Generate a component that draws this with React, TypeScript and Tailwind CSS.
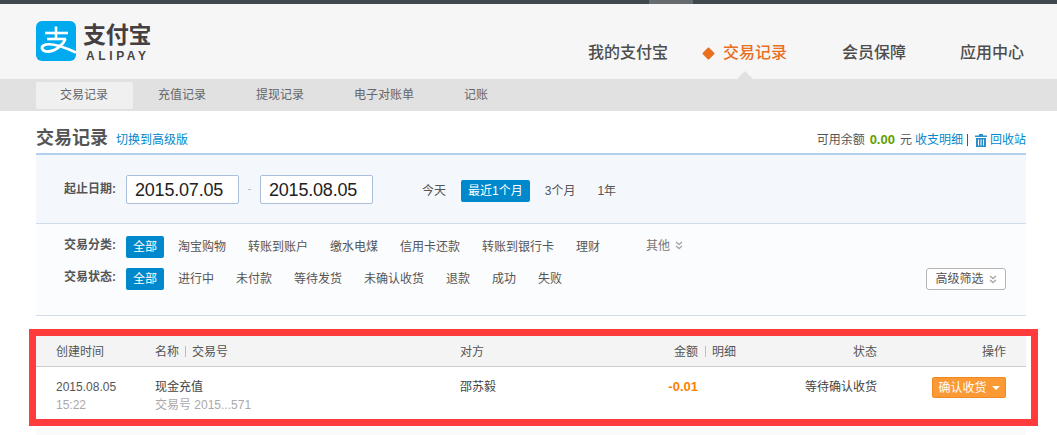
import React from 'react';

const DoubleChevron: React.FC = () => (
  <svg width="8" height="9" viewBox="0 0 8 9" fill="none" stroke="#a8a8a8" strokeWidth="1.4">
    <path d="M1 1l3 2.6L7 1" />
    <path d="M1 5l3 2.6L7 5" />
  </svg>
);

const Logo: React.FC = () => (
  <div className="flex items-start">
    <svg width="40" height="40" viewBox="0 0 40 40">
      <rect width="40" height="40" rx="6" fill="#00aaee" />
      <g fill="none" stroke="#fff" strokeWidth="2.6">
        <path d="M9 12h23" />
        <path d="M20 5.500v12" />
        <path d="M11 18h19" />
      </g>
      <path d="M29.500 18c-2 5-9 12-17 12.500-6 .5-8-4-5-6 5-3 15-1 32.500 7" fill="none" stroke="#fff" strokeWidth="2.800" />
    </svg>
    <div className="ml-[7px] flex flex-col">
      <span className="text-[23px] leading-[27px] font-bold text-[#443f40] tracking-[-0.3px] mt-[1px]">支付宝</span>
      <span className="text-[12px] leading-[12px] font-['Liberation_Sans'] font-bold tracking-[3.6px] text-[#4a4546] ml-[3px] mt-[1px]">ALIPAY</span>
    </div>
  </div>
);

const FilterRow: React.FC<{ label: string; items: string[] }> = ({ label, items }) => (
  <div className="flex items-center h-[22px]">
    <span className="w-[62px] -mt-[5px] font-bold text-[#555]">{label}</span>
    <div className="flex gap-[8px]">
      {items.map((item, i) => (
        <span
          key={item}
          className={`px-[7px] leading-[22px] rounded-[2px] ${i === 0 ? 'bg-[#0088cc] text-white -mr-[1px]' : 'text-[#555]'}`}
        >
          {item}
        </span>
      ))}
    </div>
  </div>
);

export default function App() {
  return (
    <div className="w-[1057px] h-[435px] overflow-hidden bg-white text-[12px] text-[#555] font-['Liberation_Sans','Noto_Sans_CJK_SC',sans-serif]">
      {/* top bar */}
      <div className="h-[4px] bg-[#3f484c] flex">
        <div className="w-[649px]" />
        <div className="w-[44px] bg-[#666b6f]" />
      </div>

      {/* header */}
      <div className="relative h-[75px] bg-[#f6f6f6] pl-[36px] pr-[33px] pt-[17px] flex justify-between">
        <Logo />
        <nav className="flex items-center h-[24px] mt-[20px] text-[16px] font-medium text-[#4d4d4d]">
          <span>我的支付宝</span>
          <span className="ml-[36px] w-[9px] h-[9px] rotate-45 rounded-[1px] bg-[#e8701f]" />
          <span className="ml-[10px] text-[#e8701f]">交易记录</span>
          <span className="ml-[55px]">会员保障</span>
          <span className="ml-[54px]">应用中心</span>
        </nav>
        <div className="absolute left-[737px] bottom-0 w-0 h-0 border-x-[8px] border-x-transparent border-b-[8px] border-b-[#e1e1e1]" />
      </div>

      {/* sub nav */}
      <div className="h-[32px] bg-[#e1e1e1] px-[36px] pt-[3px] flex items-start text-[#666]">
        <span className="pl-[24px] pr-[25px] h-[27px] leading-[27px] bg-[#f0f0f0] rounded-[2px]">交易记录</span>
        <span className="px-[25px] h-[27px] leading-[27px]">充值记录</span>
        <span className="px-[25px] h-[27px] leading-[27px]">提现记录</span>
        <span className="px-[25px] h-[27px] leading-[27px]">电子对账单</span>
        <span className="px-[25px] h-[27px] leading-[27px]">记账</span>
      </div>

      <div className="ml-[36px] w-[990px]">
        {/* title */}
        <div className="h-[44px] flex items-end justify-between pb-[3px] border-b-[2px] border-[#b3d0ee]">
          <div className="flex items-end">
            <span className="text-[18px] leading-[24px] font-bold text-[#555]">交易记录</span>
            <a className="ml-[8px] leading-[20px] text-[#0088cc]">切换到高级版</a>
          </div>
          <div className="flex items-center leading-[20px]">
            <span>可用余额</span>
            <span className="ml-[5px] text-[13px] font-bold text-[#5fa000]">0.00</span>
            <span className="ml-[5px]">元</span>
            <a className="ml-[3px] text-[#0088cc]">收支明细</a>
            <span className="ml-[4px] w-px h-[12px] bg-[#555]" />
            <svg className="ml-[7px]" width="12" height="13" viewBox="0 0 12 13" fill="#2a8fc9">
              <path d="M4 0h4v1.5h4V3H0V1.500h4zM1 4h10v9H1zM3 5.500v6h1v-6zM5.500 5.500v6h1v-6zM8 5.500v6h1v-6z" fillRule="evenodd" />
            </svg>
            <a className="ml-[3px] text-[#0088cc]">回收站</a>
          </div>
        </div>

        {/* date range */}
        <div className="h-[69px] bg-[#f4f8fd] border-b border-[#d0dcea] pl-[28px] pt-[20px] flex items-start">
          <span className="w-[62px] leading-[28px] font-bold text-[#555]">起止日期:</span>
          <div className="w-[113px] h-[29px] bg-white border border-[#a9bfdc] rounded-[2px] pl-[8px] text-[18px] leading-[28px] tracking-[-0.2px] text-[#222]">
            2015.07.05
          </div>
          <span className="w-[21px] text-center leading-[28px] text-[#bbb]">-</span>
          <div className="w-[113px] h-[29px] bg-white border border-[#a9bfdc] rounded-[2px] pl-[8px] text-[18px] leading-[28px] tracking-[-0.2px] text-[#222]">
            2015.08.05
          </div>
          <div className="ml-[42px] mt-[5px] flex gap-[8px] leading-[22px]">
            <span className="px-[7px]">今天</span>
            <span className="px-[7px] bg-[#0088cc] text-white rounded-[2px]">最近1个月</span>
            <span className="px-[7px]">3个月</span>
            <span className="px-[7px]">1年</span>
          </div>
        </div>

        {/* filters */}
        <div className="h-[92px] bg-[#fbfcfe] border-b border-[#d0dcea] pl-[28px] pr-[20px] pt-[12px] flex flex-col gap-[10px]">
          <div className="flex items-center">
            <FilterRow label="交易分类:" items={['全部', '淘宝购物', '转账到账户', '缴水电煤', '信用卡还款', '转账到银行卡', '理财']} />
            <span className="ml-[39px] -mt-[3px] text-[#777]">其他</span>
            <span className="ml-[5px] -mt-[3px]"><DoubleChevron /></span>
          </div>
          <div className="flex items-center justify-between">
            <FilterRow label="交易状态:" items={['全部', '进行中', '未付款', '等待发货', '未确认收货', '退款', '成功', '失败']} />
            <button className="h-[22px] w-[80px] flex items-center justify-center gap-[5px] border border-[#b5b5b5] rounded-[3px] bg-white text-[#555]">
              高级筛选
              <DoubleChevron />
            </button>
          </div>
        </div>

        {/* table */}
        <div className="relative mt-[20px]">
          <div className="h-[31px] bg-[#f4f4f4] border-b border-[#ccc] pl-[20px] pr-[20px] pt-[1px] flex items-center">
            <span className="w-[99px]">创建时间</span>
            <span className="w-[305px] flex items-center">
              名称
              <span className="mx-[6px] w-px h-[11px] bg-[#c4b8b8]" />
              交易号
            </span>
            <span className="w-[238px] flex justify-between">
              对方
              <span>金额</span>
            </span>
            <span className="ml-[7px] w-px h-[11px] bg-[#a9c8e0]" />
            <span className="ml-[6px] w-[25px]">明细</span>
            <span className="w-[140px] text-right">状态</span>
            <span className="flex-1 text-right">操作</span>
          </div>
          <div className="h-[53px] pl-[20px] pr-[20px] pt-[11px] flex items-start">
            <div className="w-[99px] leading-[18px]">
              <div>2015.08.05</div>
              <div className="text-[#aaa]">15:22</div>
            </div>
            <div className="w-[305px] leading-[18px]">
              <div className="text-[#444]">现金充值</div>
              <div className="text-[#aaa]">交易号 2015...571</div>
            </div>
            <div className="w-[238px] flex justify-between leading-[18px]">
              <span className="text-[#444]">邵苏毅</span>
              <span className="text-[13px] font-bold text-[#ff8000]">-0.01</span>
            </div>
            <div className="w-[179px] text-right leading-[18px] text-[#444]">等待确认收货</div>
            <button className="ml-auto -mt-[1px] h-[21px] w-[74px] flex items-center justify-center gap-[5px] bg-[#fb9a35] border border-[#f08a20] rounded-[2px] text-white">
              确认收货
              <span className="w-0 h-0 border-x-[4px] border-x-transparent border-t-[4px] border-t-white" />
            </button>
          </div>
          {/* red highlight drawn over the table */}
          <div className="absolute left-[-7px] top-[-7px] w-[1009px] h-[97px] border-[7px] border-[#ff3b3b] pointer-events-none" />
          <div className="h-[9px] mt-[7px] bg-[#fafafa]" />
        </div>
      </div>
    </div>
  );
}
